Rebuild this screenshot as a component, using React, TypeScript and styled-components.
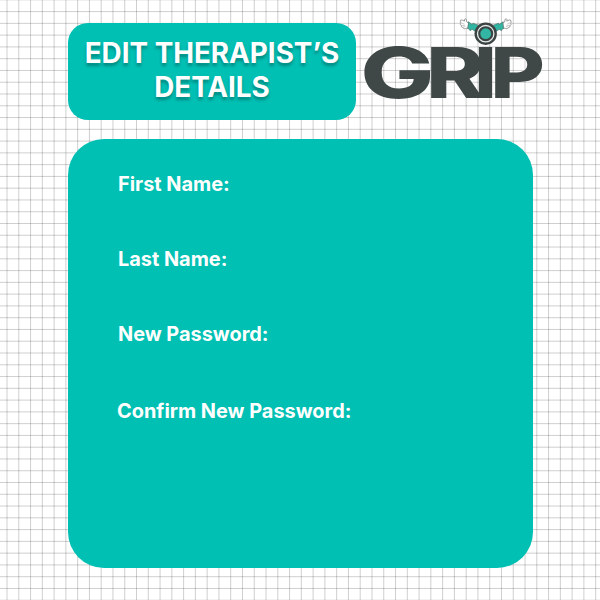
import React from "react";
import styled, { createGlobalStyle } from "styled-components";

const GlobalStyle = createGlobalStyle`
  * { box-sizing: border-box; }
  body { margin: 0; background: #fff; }
`;

const Page = styled.main`
  width: 600px;
  height: 600px;
  padding: 23px 0 0 68px;
  overflow: hidden;
  font-family: Inter, "Liberation Sans", sans-serif;
  font-optical-sizing: none;
  background-color: #fff;
  background-image:
    repeating-linear-gradient(90deg, rgba(0,0,0,0) 0, rgba(0,0,0,0.19) 1px, rgba(0,0,0,0) 2px, rgba(0,0,0,0) 11.773px),
    repeating-linear-gradient(180deg, rgba(0,0,0,0) 0, rgba(0,0,0,0.19) 1px, rgba(0,0,0,0) 2px, rgba(0,0,0,0) 11.773px);
  background-size: 620px 620px;
  background-position: -5.77px 0, 0 -1.2px;
`;

const Header = styled.header`
  display: flex;
  height: 97px;
`;

const TitleCard = styled.div`
  display: flex;
  align-items: center;
  justify-content: center;
  width: 288px;
  height: 97px;
  border-radius: 20px;
  background: #00bfb3;
`;

const Title = styled.h1`
  margin: 0;
  padding-bottom: 3px;
  color: #fff;
  font-size: 27.8px;
  line-height: 34px;
  font-weight: 700;
  text-align: center;
  white-space: nowrap;
  text-shadow: 0 3px 3px rgba(0, 0, 0, 0.28);
`;

const Logo = styled.svg`
  flex: none;
  width: 190px;
  height: 110px;
  margin: -13px 0 0 4px;
  overflow: visible;
`;

const LogoLetter = styled.text`
  font-family: Inter, sans-serif;
  font-optical-sizing: auto;
  font-weight: 800;
  font-size: 70px;
  fill: #3f4847;
`;

const Form = styled.section`
  display: flex;
  flex-direction: column;
  width: 465px;
  height: 429px;
  margin-top: 19px;
  padding: 33px 50px;
  border-radius: 36px;
  background: #00bfb3;
`;

const FieldLabel = styled.div<{ $gap: number; $shift?: number }>`
  height: 24px;
  margin-bottom: ${(p) => p.$gap}px;
  margin-left: ${(p) => p.$shift ?? 0}px;
  color: #fff;
  font-size: 19.9px;
  line-height: 24px;
  font-weight: 700;
`;

const Arm = () => (
  <g transform="translate(0 .5)" strokeLinejoin="round" strokeLinecap="round">
    <path d="M117.800 14.400 L112.800 12.800 L112.300 14 L108.200 11.200 L107.200 17.800 L109.400 18.800 L110 20.200 L112.200 18.800 L116 21.400Z" fill="#32b5a3" stroke="#35514c" strokeWidth=".5" />
    <path d="M108.200 12.400 L106.700 11.400 L106.200 8.600 Q105 7.600 104.400 9.200 L104.600 10.600 L101.800 9.400 Q100.200 9.200 100.600 10.600 Q99.600 11.600 100.800 12.800 Q99.800 14 101.200 15 Q101 16.800 102.800 17 Q104 19 105.600 18 L107.500 17.400Z" fill="#fff" stroke="#777" strokeWidth=".7" />
    <path d="M101.500 12.400 L104.200 13.600 M101.800 14.800 L104.400 15.200 M103 16.800 L105 16" fill="none" stroke="#999" strokeWidth=".5" />
  </g>
);

const GripLogo = () => (
  <Logo viewBox="0 0 190 110" role="img" aria-label="GRIP">
    <LogoLetter transform="translate(.4 87.500) scale(1.4 1)">G</LogoLetter>
    <LogoLetter transform="translate(66.200 87.500) scale(1.25 1)">R</LogoLetter>
    <LogoLetter transform="translate(114.400 87.500) scale(1.1 1)">I</LogoLetter>
    <LogoLetter transform="translate(130.400 87.500) scale(1.19 1)">P</LogoLetter>
    <Arm />
    <g transform="translate(251.400 0) scale(-1 1)"><Arm /></g>
    <circle cx="125.700" cy="23.700" r="11.200" fill="#3b4442" />
    <circle cx="125.700" cy="23.700" r="8.200" fill="#3b4442" stroke="#e6ebea" strokeWidth="1.300" />
    <circle cx="125.700" cy="23.700" r="5.400" fill="#32b5a3" />
  </Logo>
);

const App = () => (
  <>
    <GlobalStyle />
    <Page>
      <Header>
        <TitleCard>
          <Title>EDIT THERAPIST’S<br />DETAILS</Title>
        </TitleCard>
        <GripLogo />
      </Header>
      <Form>
        <FieldLabel $gap={51}>First Name:</FieldLabel>
        <FieldLabel $gap={51}>Last Name:</FieldLabel>
        <FieldLabel $gap={53}>New Password:</FieldLabel>
        <FieldLabel $gap={0} $shift={-1}>Confirm New Password:</FieldLabel>
      </Form>
    </Page>
  </>
);

export default App;
